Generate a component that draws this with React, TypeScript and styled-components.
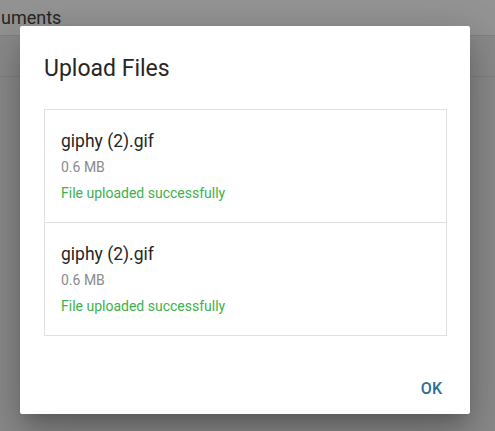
import React from "react";
import styled, { createGlobalStyle } from "styled-components";

const Global = createGlobalStyle`
  html, body { margin: 0; padding: 0; }
  body {
    width: 495px;
    height: 431px;
    overflow: hidden;
    background: #f0f0f0;
    font-family: Roboto, "Liberation Sans", Arial, sans-serif;
  }
`;

const Page = styled.div`
  position: relative;
  width: 495px;
  height: 431px;
  overflow: hidden;
  background: #f0f0f0;
`;

const TopBar = styled.header`
  height: 35px;
  background: #ffffff;
  border-bottom: 1px solid #e0e0e0;
  display: flex;
  align-items: center;
  padding-left: 1px;
`;

const TopTitle = styled.span`
  font-size: 18px;
  color: #444;
  white-space: nowrap;
`;

const Row = styled.div`
  height: 40px;
  border-bottom: 1px solid #e0e0e0;
`;

const Backdrop = styled.div`
  position: absolute;
  inset: 0;
  background: rgba(0, 0, 0, 0.42);
`;

const Dialog = styled.div`
  position: absolute;
  left: 20px;
  top: 26px;
  width: 450px;
  background: #ffffff;
  border-radius: 2px;
  box-shadow: 0 11px 15px -7px rgba(0, 0, 0, 0.2),
    0 24px 38px 3px rgba(0, 0, 0, 0.14), 0 9px 46px 8px rgba(0, 0, 0, 0.12);
  display: flex;
  flex-direction: column;
`;

const Title = styled.h2`
  margin: 0;
  padding: 29px 24px 0;
  font-size: 23px;
  line-height: 28px;
  font-weight: 400;
  color: #262626;
`;

const FileList = styled.ul`
  list-style: none;
  margin: 26px 23px 0 24px;
  padding: 0;
  border: 1px solid #e0e0e0;
`;

const FileItem = styled.li`
  padding: 20px 16px 20px;
  display: flex;
  flex-direction: column;
  & + & {
    border-top: 1px solid #e0e0e0;
  }
`;

const FileName = styled.div`
  font-size: 17.5px;
  line-height: 22px;
  color: #262626;
`;

const Meta = styled.div<{ $tone: "muted" | "success" }>`
  font-size: 14px;
  line-height: 18px;
  margin-top: ${(p) => (p.$tone === "muted" ? "6px" : "8px")};
  color: ${(p) => (p.$tone === "muted" ? "#8a8a8a" : "#3db14b")};
`;

const Actions = styled.div`
  display: flex;
  justify-content: flex-end;
  padding: 34px 20px 8px;
`;

const TextButton = styled.button`
  height: 36px;
  padding: 0 8px;
  border: none;
  background: transparent;
  font-family: Roboto, "Liberation Sans", Arial, sans-serif;
  font-size: 16px;
  font-weight: 500;
  color: #2b6e93;
  cursor: pointer;
`;

const files = [
  { name: "giphy (2).gif", size: "0.6 MB", status: "File uploaded successfully" },
  { name: "giphy (2).gif", size: "0.6 MB", status: "File uploaded successfully" },
];

export default function App() {
  return (
    <Page>
      <Global />
      <TopBar>
        <TopTitle>uments</TopTitle>
      </TopBar>
      <Row />
      <Backdrop />
      <Dialog role="dialog">
        <Title>Upload Files</Title>
        <FileList>
          {files.map((f, i) => (
            <FileItem key={i}>
              <FileName>{f.name}</FileName>
              <Meta $tone="muted">{f.size}</Meta>
              <Meta $tone="success">{f.status}</Meta>
            </FileItem>
          ))}
        </FileList>
        <Actions>
          <TextButton>OK</TextButton>
        </Actions>
      </Dialog>
    </Page>
  );
}
